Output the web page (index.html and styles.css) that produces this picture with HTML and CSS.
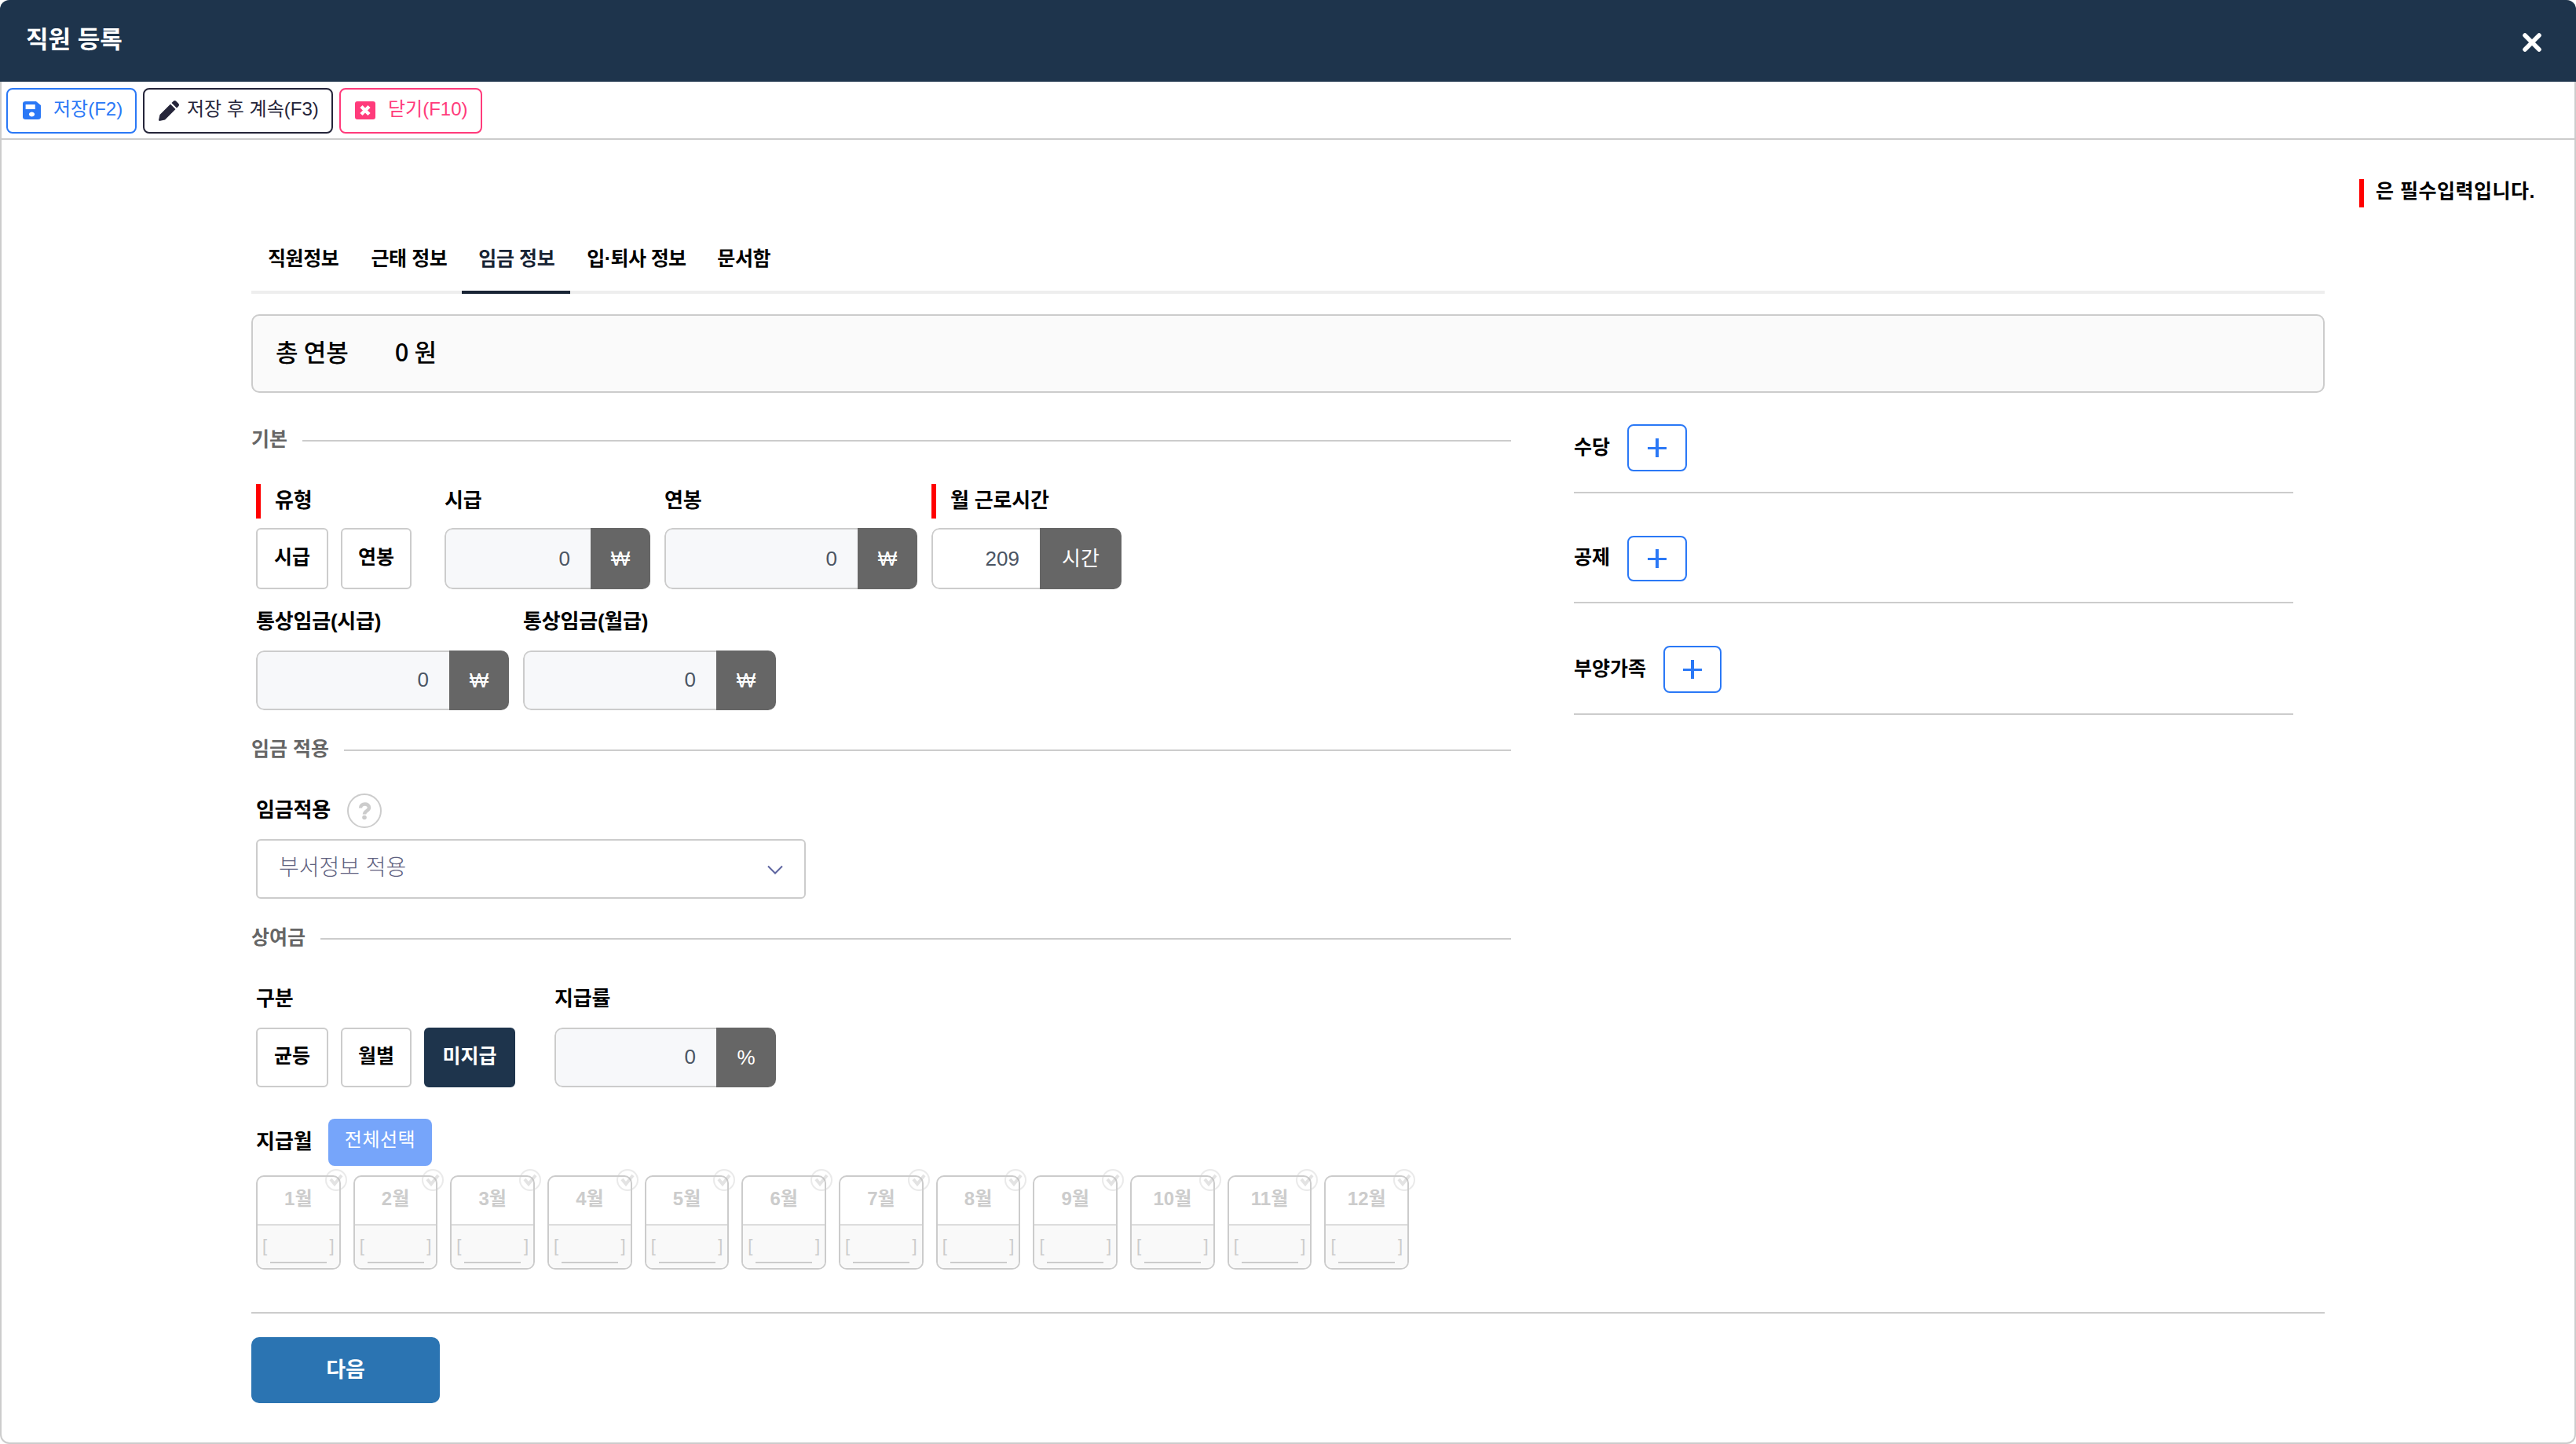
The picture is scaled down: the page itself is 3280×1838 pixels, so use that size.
FILE: index.html
```html
<!DOCTYPE html>
<html lang="ko">
<head>
  <meta charset="UTF-8">
  <meta name="viewport" content="width=device-width, initial-scale=1.0">
  <title>직원 등록</title>
  <link rel="stylesheet" href="styles.css">
</head>
<body>
  <div class="modal">
    <header class="modal-header">
      <h1>직원 등록</h1>
      <svg class="close" viewBox="0 0 26 26"><path d="M4 4L22 22M22 4L4 22"/></svg>
    </header>

    <div class="toolbar">
      <button class="btn-save">
        <svg width="19" height="23" viewBox="0 0 19 23" preserveAspectRatio="none"><path fill="currentColor" fill-rule="evenodd" d="M3 0h11l5 5v15a3 3 0 0 1-3 3H3a3 3 0 0 1-3-3V3a3 3 0 0 1 3-3zM3 4v6h10V4zM9.500 13.500a3 3 0 1 0 .01 0z"/></svg>
        <span>저장(F2)</span>
      </button>
      <button class="btn-continue">
        <svg width="26" height="26" viewBox="0 0 26 26"><path fill="currentColor" d="M15 4.500l6.500 6.500L8 24.500 1 26 0 25 1.500 18zM16.500 3l2-2q2-2 4 0l2.500 2.500q2 2 0 4l-2 2z"/></svg>
        <span>저장 후 계속(F3)</span>
      </button>
      <button class="btn-close">
        <svg width="26" height="23" viewBox="0 0 26 23"><rect width="26" height="23" rx="3" fill="currentColor"/><path d="M8 6.500L18 16.500M18 6.500L8 16.500" stroke="#fff" stroke-width="4.500"/></svg>
        <span>닫기(F10)</span>
      </button>
    </div>

    <p class="required-note">은 필수입력입니다.</p>

    <div class="container">
      <nav class="tabs">
        <a>직원정보</a>
        <a>근태 정보</a>
        <a class="active">임금 정보</a>
        <a class="leave">입·퇴사 정보</a>
        <a>문서함</a>
      </nav>

      <div class="total"><span class="total-label">총 연봉</span><span>0 원</span></div>

      <div class="columns">
        <div class="left">
          <h2 class="section-title first"><span>기본</span></h2>
          <div class="row tall">
            <div class="field type">
              <div class="label required">유형</div>
              <div class="choices"><button class="w92">시급</button><button class="w90">연봉</button></div>
            </div>
            <div class="field hourly">
              <div class="label">시급</div>
              <div class="input"><span class="value off">0</span><span class="unit">₩</span></div>
            </div>
            <div class="field money">
              <div class="label">연봉</div>
              <div class="input"><span class="value off">0</span><span class="unit">₩</span></div>
            </div>
            <div class="field hours">
              <div class="label required">월 근로시간</div>
              <div class="input"><span class="value">209</span><span class="unit">시간</span></div>
            </div>
          </div>
          <div class="row next">
            <div class="field money">
              <div class="label">통상임금(시급)</div>
              <div class="input"><span class="value off">0</span><span class="unit">₩</span></div>
            </div>
            <div class="field money">
              <div class="label">통상임금(월급)</div>
              <div class="input"><span class="value off">0</span><span class="unit">₩</span></div>
            </div>
          </div>

          <h2 class="section-title"><span>임금 적용</span></h2>
          <div class="row">
            <div class="field apply">
              <div class="label has-help">임금적용
                <svg class="help" viewBox="0 0 44 44"><circle cx="22" cy="22" r="21"/><path d="M17 18.500C17 12 28 12 28 18c0 4-6 4-6 8.500"/><circle class="dot" cx="22" cy="30.500" r="2.800"/></svg>
              </div>
              <div class="select">부서정보 적용
                <svg width="20" height="12" viewBox="0 0 20 12"><path d="M1 1.500l9 9 9-9"/></svg>
              </div>
            </div>
          </div>

          <h2 class="section-title"><span>상여금</span></h2>
          <div class="row">
            <div class="field bonus">
              <div class="label">구분</div>
              <div class="choices"><button class="w92">균등</button><button class="w90">월별</button><button class="w116 selected">미지급</button></div>
            </div>
            <div class="field rate">
              <div class="label">지급률</div>
              <div class="input"><span class="value off">0</span><span class="unit">%</span></div>
            </div>
          </div>

          <div class="month-head"><span>지급월</span><button>전체선택</button></div>
          <div class="months" id="months"></div>
        </div>

        <div class="right">
          <div class="extra">수당<button class="add"></button></div>
          <div class="extra low">공제<button class="add"></button></div>
          <div class="extra family">부양가족<button class="add"></button></div>
        </div>
      </div>

      <div class="footer"><button>다음</button></div>
    </div>
  </div>

  <script>
    const months = document.getElementById("months");
    for (let m = 1; m <= 12; m++) {
      const box = document.createElement("div");
      box.className = "month";
      box.innerHTML = `
        <div class="month-name">${m}월</div>
        <div class="month-value"><span>[</span><i></i><span>]</span></div>
        <svg class="check" viewBox="0 0 28 28"><circle cx="14" cy="14" r="13"/><path d="M7 13l5 6 9-11"/></svg>
      `;
      months.appendChild(box);
    }
  </script>
</body>
</html>
```
FILE: styles.css
```css
* {
  box-sizing: border-box;
}
body {
  margin: 0;
  background: #fff;
  color: #000;
  font-family: "Liberation Sans", "Noto Sans CJK KR", sans-serif;
  font-size: 25px;
  line-height: 36px;
}
h1, h2, p {
  margin: 0;
}
button {
  font: inherit;
  color: inherit;
  letter-spacing: inherit;
  padding: 0;
  background: #fff;
}
svg {
  fill: none;
  flex: none;
}
.modal {
  height: 1838px;
  border: 2px solid #ccc;
  border-top: 0;
  border-radius: 12px;
}
.modal-header {
  height: 104px;
  margin: 0 -2px;
  padding: 0 43px 2px 33px;
  display: flex;
  align-items: center;
  justify-content: space-between;
  background: #1e344c;
  border-radius: 12px 12px 0 0;
  color: #fff;
}
.modal-header h1 {
  font-size: 31px;
  font-weight: 600;
}
.close {
  width: 26px;
  height: 26px;
  margin-top: 6px;
  stroke: #fff;
  stroke-width: 5.5;
  stroke-linecap: round;
}
.toolbar {
  height: 74px;
  padding: 8px 6px;
  display: flex;
  gap: 8px;
  border-bottom: 2px solid #ccc;
}
.toolbar button {
  height: 58px;
  display: flex;
  align-items: center;
  border: 2px solid;
  border-radius: 8px;
  font-size: 24px;
  padding-bottom: 1px;
}
.toolbar span {
  margin-top: -3px;
}
.toolbar .btn-save {
  width: 166px;
  padding-left: 19px;
  gap: 16px;
  color: #2a78f6;
}
.toolbar .btn-save svg {
  width: 23px;
}
.toolbar .btn-continue {
  width: 242px;
  padding-left: 18px;
  gap: 10px;
  color: #25253a;
}
.toolbar .btn-close {
  width: 182px;
  padding-left: 18px;
  gap: 16px;
  color: #ff3b7b;
}
.required-note {
  height: 36px;
  width: max-content;
  margin: 50px 50px 0 auto;
  padding-left: 15px;
  border-left: 6px solid #f00;
  font-weight: bold;
  line-height: 31px;
  letter-spacing: 0.5px;
}
.container {
  width: 2640px;
  margin: 26px 318px 0;
}
.tabs {
  display: flex;
  height: 84px;
  border-bottom: 4px solid #eee;
  font-weight: bold;
  white-space: nowrap;
}
.tabs a {
  height: 84px;
  padding: 21px 20px 0 21px;
  letter-spacing: -0.4px;
}
.tabs .active {
  width: 138px;
  margin-left: -1px;
  color: #182435;
  border-bottom: 4px solid #182435;
}
.tabs .leave {
  width: 166px;
  letter-spacing: -0.6px;
}
.total {
  height: 100px;
  margin-top: 26px;
  padding: 0 30px 7px 29px;
  display: flex;
  align-items: center;
  gap: 59px;
  background: #fafafa;
  border: 2px solid #ccc;
  border-radius: 10px;
  font-family: "Noto Sans CJK KR", sans-serif;
  font-size: 31px;
  font-weight: 500;
  word-spacing: -1.5px;
}
.columns {
  display: flex;
  gap: 80px;
}
.left {
  width: 1604px;
}
.section-title {
  display: flex;
  align-items: center;
  gap: 19px;
  height: 40px;
  margin-top: 31px;
  color: #666;
  font-size: 25px;
  font-weight: 600;
  line-height: 36px;
  white-space: nowrap;
}
.section-title.first {
  margin-top: 41px;
}
.section-title span {
  padding-bottom: 4px;
}
.section-title::after {
  content: "";
  flex: 1;
  height: 2px;
  background: #ccc;
}
.row {
  display: flex;
  gap: 18px;
  margin: 35px 0 0 6px;
}
.row.next {
  margin-top: 20px;
}
.label {
  display: flex;
  align-items: center;
  height: 44px;
  margin-bottom: 14px;
  padding-bottom: 3px;
  font-size: 26px;
  font-weight: bold;
  letter-spacing: -0.2px;
}
.tall .label {
  margin-bottom: 12px;
}
.label.required {
  padding-left: 18px;
  border-left: 6px solid #f00;
}
.help {
  width: 44px;
  height: 44px;
  margin: 3px 0 0 21px;
  stroke: #ccc;
  stroke-width: 2;
}
.help path {
  stroke-width: 4.5;
}
.help .dot {
  fill: #ccc;
  stroke: none;
}
.type {
  width: 222px;
}
.hourly {
  width: 262px;
}
.money {
  width: 322px;
}
.hours {
  width: 242px;
}
.bonus {
  width: 362px;
}
.rate {
  width: 282px;
}
.apply {
  width: 700px;
}
.choices {
  display: flex;
  gap: 16px;
}
.choices button {
  height: 76px;
  border: 2px solid #ccc;
  border-radius: 6px;
  font-weight: bold;
  padding-bottom: 5px;
}
.w92 {
  width: 92px;
}
.w90 {
  width: 90px;
}
.w116 {
  width: 116px;
}
.choices .selected {
  background: #1e344c;
  border-color: #1e344c;
  color: #fff;
}
.input {
  display: flex;
  height: 76px;
  border-radius: 10px;
  overflow: hidden;
  font-size: 26px;
}
.tall .input, .tall .choices button {
  height: 78px;
}
.value {
  flex: 1;
  display: flex;
  align-items: center;
  justify-content: flex-end;
  padding: 0 26px 2px 0;
  border: 2px solid #ccc;
  border-right: 0;
  border-radius: 10px 0 0 10px;
  color: #4b5563;
}
.tall .value {
  padding-bottom: 0;
}
.value.off {
  background: #f7f8fa;
}
.unit {
  width: 76px;
  display: flex;
  align-items: center;
  justify-content: center;
  padding-bottom: 1px;
  background: #666;
  color: #fff;
}
.hours .unit {
  width: 104px;
}
.select {
  display: flex;
  align-items: center;
  justify-content: space-between;
  height: 76px;
  padding: 0 27px 3px;
  border: 2px solid #ccc;
  border-radius: 6px;
  color: #5f6280;
  font-size: 28px;
  font-weight: 300;
}
.select svg {
  margin-top: 5px;
  stroke: #5d64a0;
  stroke-width: 2;
}
.month-head {
  display: flex;
  align-items: center;
  height: 60px;
  margin: 40px 0 12px 6px;
  font-size: 26px;
  font-weight: bold;
}
.month-head span {
  width: 92px;
  padding-bottom: 3px;
}
.month-head button {
  width: 132px;
  height: 60px;
  padding-bottom: 6px;
  border: 0;
  border-radius: 8px;
  background: #76a5fa;
  color: #fff;
  font-size: 24px;
  font-weight: 400;
  letter-spacing: 0.5px;
}
.months {
  display: flex;
  gap: 16px;
  width: 1468px;
  margin-left: 6px;
}
.month {
  position: relative;
  flex: 1;
  height: 120px;
  border: 2px solid #ccc;
  border-radius: 10px;
  color: #ccc;
}
.month-name {
  height: 60px;
  padding-top: 10px;
  text-align: center;
  font-weight: bold;
  font-size: 24px;
}
.month-value {
  display: flex;
  justify-content: space-between;
  height: 56px;
  padding: 8px 6px 0;
  border-top: 2px solid #ddd;
  border-radius: 0 0 8px 8px;
  background: #f9f9f9;
  font-size: 22px;
}
.month-value i {
  width: 72px;
  height: 2px;
  margin: 38px -4px 0;
  background: #ccc;
}
.check {
  position: absolute;
  top: -10px;
  right: -10px;
  width: 28px;
  height: 28px;
  stroke: #ccc;
  stroke-width: 2;
  opacity: 0.4;
}
.check path {
  stroke-width: 4;
  stroke: #bbb;
}
.right {
  width: 916px;
  padding-top: 40px;
}
.extra {
  display: flex;
  align-items: flex-start;
  height: 88px;
  margin-bottom: 54px;
  gap: 22px;
  border-bottom: 2px solid #ccc;
  font-weight: bold;
  line-height: 58px;
}
.extra.low {
  height: 86px;
  line-height: 55px;
}
.add {
  width: 76px;
  height: 60px;
  border: 2px solid #2a78f6;
  border-radius: 8px;
  background: linear-gradient(#2a78f6, #2a78f6) center / 24px 3px no-repeat, linear-gradient(#2a78f6, #2a78f6) center / 4px 24px no-repeat;
}
.low .add {
  height: 58px;
}
.family .add {
  width: 74px;
}
.footer {
  margin-top: 54px;
  padding-top: 30px;
  border-top: 2px solid #ccc;
}
.footer button {
  width: 240px;
  height: 84px;
  padding-bottom: 1px;
  border: 0;
  border-radius: 10px;
  background: #2b74b2;
  color: #fff;
  font-weight: bold;
  font-size: 27px;
}
```
